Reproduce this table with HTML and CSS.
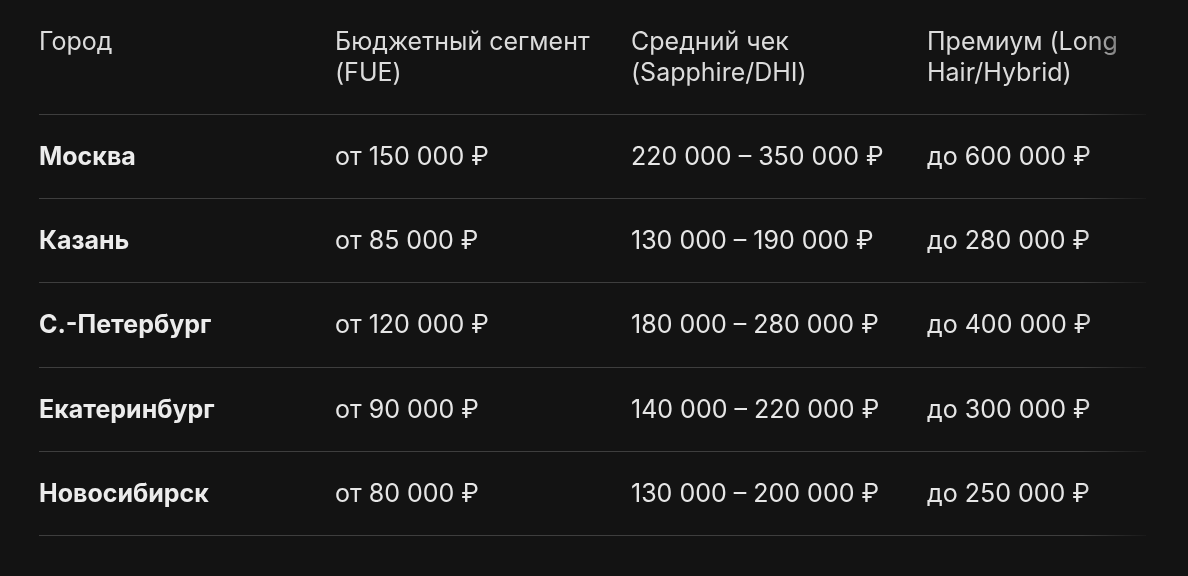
FILE: index.html
```html
<!DOCTYPE html>
<html lang="ru">
<head>
<meta charset="utf-8">
<link rel="stylesheet" href="styles.css">
</head>
<body>
<div class="table-wrap">
  <table class="price-table">
    <colgroup>
      <col class="col-main">
      <col class="col-main">
      <col class="col-main">
      <col class="col-last">
    </colgroup>
    <thead>
      <tr>
        <th>Город</th>
        <th>Бюджетный сегмент (FUE)</th>
        <th>Средний чек (Sapphire/DHI)</th>
        <th>Премиум (Long Hair/Hybrid)</th>
      </tr>
    </thead>
    <tbody>
      <tr><td class="city">Москва</td><td>от 150 000 ₽</td><td>220 000 – 350 000 ₽</td><td>до 600 000 ₽</td></tr>
      <tr><td class="city">Казань</td><td>от 85 000 ₽</td><td>130 000 – 190 000 ₽</td><td>до 280 000 ₽</td></tr>
      <tr><td class="city">С.-Петербург</td><td>от 120 000 ₽</td><td>180 000 – 280 000 ₽</td><td>до 400 000 ₽</td></tr>
      <tr><td class="city">Екатеринбург</td><td>от 90 000 ₽</td><td>140 000 – 220 000 ₽</td><td>до 300 000 ₽</td></tr>
      <tr><td class="city">Новосибирск</td><td>от 80 000 ₽</td><td>130 000 – 200 000 ₽</td><td>до 250 000 ₽</td></tr>
    </tbody>
  </table>
</div>
</body>
</html>
```
FILE: styles.css
```css
html, body {
  margin: 0;
  padding: 0;
  background: #131313;
}
body {
  font-family: Inter, "Noto Sans", sans-serif;
  color: #e6e6e6;
  height: 576px;
  overflow: hidden;
}
.table-wrap {
  margin: 0 42px 0 39px;
  overflow: hidden;
  -webkit-mask-image: linear-gradient(to right, #000 calc(100% - 64px), rgba(0,0,0,0.15));
  mask-image: linear-gradient(to right, #000 calc(100% - 64px), rgba(0,0,0,0.15));
}
.price-table {
  border-collapse: collapse;
  table-layout: fixed;
  width: 100%;
  font-size: 25px;
  line-height: 31px;
}
.col-main { width: 296px; }
.col-last { width: auto; }
.price-table th,
.price-table td {
  padding: 26px 16px 26px 0;
  text-align: left;
  border-bottom: 1px solid #3e3e3e;
}
.price-table th {
  font-weight: 400;
  color: #dcdcdc;
  vertical-align: top;
}
.price-table td {
  font-weight: 400;
  vertical-align: middle;
  padding-top: 26.1px;
  padding-bottom: 26.1px;
}
.price-table td.city {
  font-weight: 700;
  color: #ececec;
}
```
